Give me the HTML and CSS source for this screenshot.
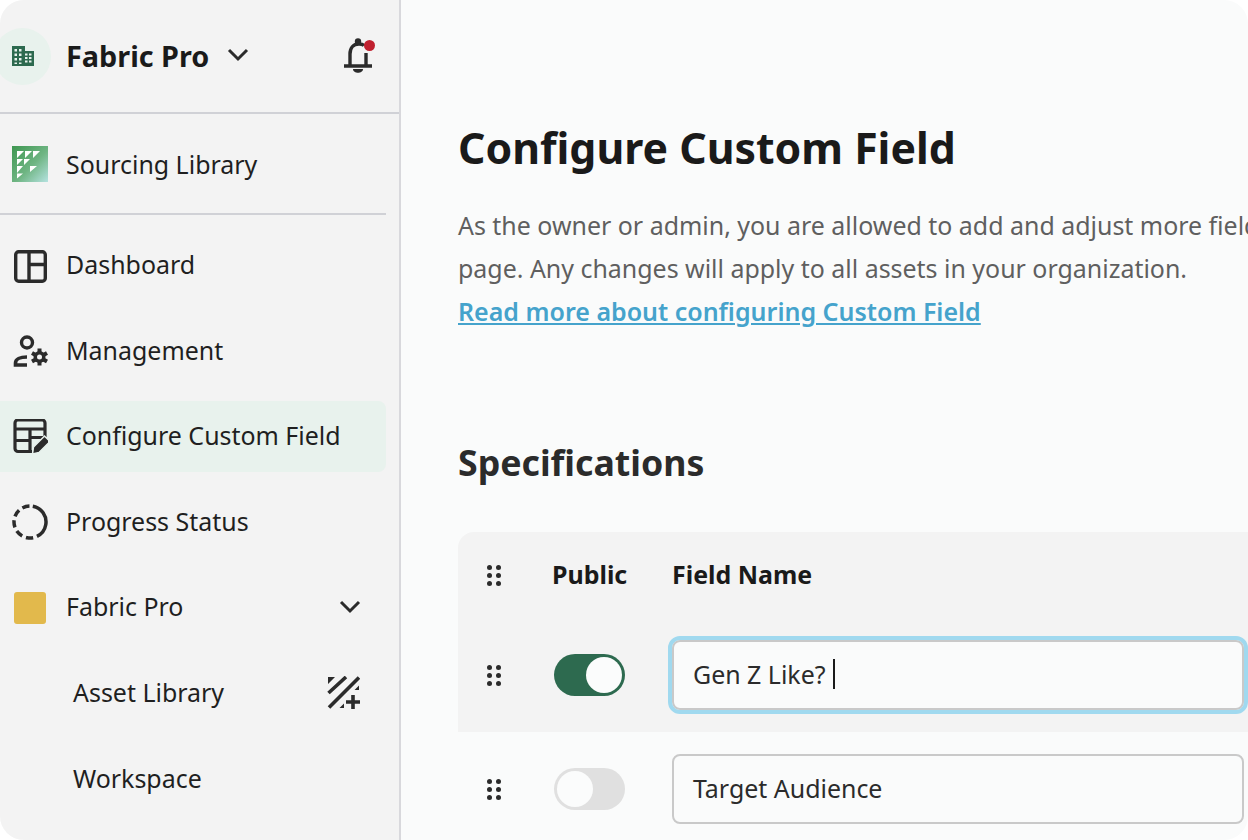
FILE: index.html
```html
<!DOCTYPE html>
<html lang="en">
<head>
    <meta charset="UTF-8">
    <meta name="viewport" content="width=device-width, initial-scale=1.0">
    <title>Configure Custom Field</title>
    <link rel="stylesheet" href="styles.css">
</head>
<body>
    <div class="frame">
        <aside class="sidebar">
            <div class="org">
                <div class="org-avatar">
                    <svg width="24" height="24" viewBox="0 0 24 24"><path fill="#2d6a4f" fill-rule="evenodd" d="M1 2h13v5h9v15H1zM3.500 5v2.500H6V5zM8 5v2.500h2.500V5zM3.500 9.500V12H6V9.500zM8 9.500V12h2.500V9.500zM3.500 14v2.500H6V14zM8 14v2.500h2.500V14zM3.500 18.500V20H6v-1.500zM8 18.500V20h2.500v-1.500zM14 9.500v2h2.500v-2zM18 9.500v2h2.500v-2zM14 13v2h2.500v-2zM18 13v2h2.500v-2zM14 16.500v2h2.500v-2zM18 16.500v2h2.500v-2z"/></svg>
                </div>
                <span class="org-name">Fabric Pro</span>
                <svg class="org-chevron" width="24" height="16" viewBox="0 0 24 16"><path d="M3 3l9 9 9-9" fill="none" stroke="#2b2b2b" stroke-width="3"/></svg>
                <div class="bell">
                    <svg width="32" height="38" viewBox="0 0 32 38"><path d="M3 29h28M9 29V17c0-6 3-10 9-10c2 0 4 .5 5 1.500M25 29V16" fill="none" stroke="#2b2b2b" stroke-width="3.400"/><circle cx="17" cy="4.500" r="3.200" fill="#2b2b2b"/><path d="M12 32h10c0 5-10 5-10 0z" fill="#2b2b2b"/></svg>
                    <span class="bell-dot"></span>
                </div>
            </div>

            <div class="sourcing">
                <svg width="36" height="36" viewBox="0 0 36 36">
                    <defs>
                        <linearGradient id="srcGrad" x1="0" y1="0" x2="1" y2="1">
                            <stop offset="0" stop-color="#3e9650"/>
                            <stop offset="0.55" stop-color="#6fb583"/>
                            <stop offset="1" stop-color="#b5e2e0"/>
                        </linearGradient>
                    </defs>
                    <rect width="36" height="36" fill="url(#srcGrad)"/>
                    <path fill="#fff" d="M5 5h7l-7 7zM13 5h7l-7 7zM21 5h7l-7 7zM5 13h6l-6 6zM12 13h6l-6 6zM5 20h6l-6 7zM18 20h7l-7 6zM5 27.500h6l-6 5z"/>
                </svg>
                <span>Sourcing Library</span>
            </div>

            <nav class="nav">
                <a class="nav-item">
                    <svg width="36" height="36" viewBox="0 0 36 36"><rect x="3.700" y="3.700" width="29.600" height="29.600" rx="3" fill="none" stroke="#2b2b2b" stroke-width="3.400"/><path d="M17 4v29M17 16.500h16" stroke="#2b2b2b" stroke-width="3.400"/></svg>
                    <span class="label">Dashboard</span>
                </a>
                <a class="nav-item">
                    <svg width="36" height="36" viewBox="0 0 36 36"><circle cx="15" cy="9.500" r="5.500" fill="none" stroke="#2b2b2b" stroke-width="3.400"/><path d="M15 24c-7 0-11.500 2-11.500 6v2h11.500" fill="none" stroke="#2b2b2b" stroke-width="3.600"/><path d="M27.500 15.500v17M20 20l15 8.500M20 28.500l15-8.500" stroke="#2b2b2b" stroke-width="4"/><circle cx="27.500" cy="24" r="6" fill="#2b2b2b"/><circle cx="27.500" cy="24" r="2.500" fill="#f3f3f3"/></svg>
                    <span class="label">Management</span>
                </a>
                <a class="nav-item active">
                    <svg width="36" height="36" viewBox="0 0 36 36"><path d="M20 32.500H6a3 3 0 0 1-3-3V4a3 3 0 0 1 3-3h24a3 3 0 0 1 3 3V18M3 10h30M3 21.500h15M18 10v21M18 18.500h14" fill="none" stroke="#2b2b2b" stroke-width="3.200"/><path d="M20.500 35l1-7L32.500 17l5.500 5.500L27 33.500z" fill="#2b2b2b" stroke="#e8f2ed" stroke-width="1.500"/></svg>
                    <span class="label">Configure Custom Field</span>
                </a>
                <a class="nav-item">
                    <svg width="36" height="36" viewBox="0 0 36 36"><circle cx="18" cy="18" r="16" fill="none" stroke="#2b2b2b" stroke-width="3.500" stroke-dasharray="40 4 7.300 4 7.300 4 7.300 4 7.300 4 7.300 4" transform="rotate(-80 18 18)"/></svg>
                    <span class="label">Progress Status</span>
                </a>
                <a class="nav-item">
                    <span class="swatch"></span>
                    <span class="label">Fabric Pro</span>
                    <svg class="nav-chevron" width="24" height="16" viewBox="0 0 24 16"><path d="M3 3l9 9 9-9" fill="none" stroke="#2b2b2b" stroke-width="3"/></svg>
                </a>
                <a class="nav-item sub">
                    <span class="label">Asset Library</span>
                    <svg class="nav-add" width="34" height="34" viewBox="0 0 34 34"><path d="M2 1h7L2 8zM33 9.500V14h-4.500zM18 27.500V32h-4.500z" fill="#2b2b2b"/><path d="M2.500 17L20 1M3 31.500L33 1.500" stroke="#2b2b2b" stroke-width="3.600"/><path d="M27 19v14M20 26h14" stroke="#2b2b2b" stroke-width="3.600"/></svg>
                </a>
                <a class="nav-item sub">
                    <span class="label">Workspace</span>
                </a>
            </nav>
        </aside>

        <main class="content">
            <h1>Configure Custom Field</h1>
            <p class="intro">
                As the owner or admin, you are allowed to add and adjust more fields on this<br>
                page. Any changes will apply to all assets in your organization.<br>
                <a href="#">Read more about configuring Custom Field</a>
            </p>

            <h2>Specifications</h2>

            <div class="spec-table">
                <div class="spec-row spec-head">
                    <div class="handle"><i></i><i></i><i></i><i></i><i></i><i></i></div>
                    <div class="head-cell">Public</div>
                    <div class="head-cell">Field Name</div>
                </div>
                <div class="spec-row editing">
                    <div class="handle"><i></i><i></i><i></i><i></i><i></i><i></i></div>
                    <div class="toggle on"><span></span></div>
                    <div class="field focus">Gen Z Like?<span class="caret"></span></div>
                </div>
                <div class="spec-row">
                    <div class="handle"><i></i><i></i><i></i><i></i><i></i><i></i></div>
                    <div class="toggle"><span></span></div>
                    <div class="field">Target Audience</div>
                </div>
            </div>
        </main>
    </div>
</body>
</html>
```

FILE: styles.css
```css
* {
    box-sizing: border-box;
}
html, body {
    margin: 0;
    padding: 0;
    height: 100%;
    background-color: #ffffff;
}
body {
    font-family: "Noto Sans", sans-serif;
    color: #1f1f1f;
    overflow: hidden;
}
.frame {
    display: flex;
    width: 1248px;
    height: 840px;
    border-radius: 24px;
    overflow: hidden;
    background-color: #fafbfb;
}

/* sidebar */
.sidebar {
    width: 401px;
    flex-shrink: 0;
    background-color: #f3f3f3;
    border-right: 2px solid #d8d8dc;
}
.org {
    display: flex;
    align-items: center;
    height: 114px;
    border-bottom: 2px solid #d0d1d6;
    padding-right: 26px;
}
.org-avatar {
    width: 57px;
    height: 57px;
    margin-left: -6px;
    border-radius: 50%;
    background-color: #e8f2ed;
    display: flex;
    align-items: center;
    justify-content: center;
    flex-shrink: 0;
}
.org-name {
    margin-left: 15px;
    font-size: 28.800px;
    font-weight: 700;
    color: #1a1a1a;
    margin-bottom: 2px;
}
.org-chevron {
    margin-left: 17px;
    margin-bottom: 2px;
}
.bell {
    margin-left: auto;
    position: relative;
    display: flex;
}
.bell-dot {
    position: absolute;
    top: 2.500px;
    right: -1.500px;
    width: 11px;
    height: 11px;
    border-radius: 50%;
    background-color: #c0202f;
}
.sourcing {
    display: flex;
    align-items: center;
    gap: 18px;
    height: 101px;
    margin-right: 13px;
    padding-left: 12px;
    border-bottom: 2px solid #d0d1d6;
    font-size: 24.950px;
}
.label {
    margin-bottom: 3px;
}
.nav {
    display: flex;
    flex-direction: column;
    gap: 14.600px;
    padding-top: 15px;
    margin-right: 13px;
}
.nav-item {
    display: flex;
    align-items: center;
    gap: 18px;
    height: 71px;
    padding-left: 12px;
    font-size: 24.950px;
    border-radius: 0 8px 8px 0;
}
.nav-item.active {
    background-color: #e8f2ed;
}
.nav-item.sub {
    padding-left: 73px;
}
.swatch {
    width: 32px;
    height: 32px;
    margin: 0 2px;
    border-radius: 3px;
    background-color: #e2b94c;
}
.nav-chevron {
    margin-left: auto;
    margin-right: 24px;
    margin-bottom: 2px;
}
.nav-add {
    margin-left: auto;
    margin-right: 26px;
}

/* main area */
.content {
    flex: 1;
    min-width: 0;
    padding: 118px 0 0 57px;
}
h1 {
    margin: 0;
    font-size: 42.800px;
    line-height: 60px;
    font-weight: 700;
    color: #1a1a1a;
}
.intro {
    margin: 26px 0 0;
    font-size: 24.950px;
    line-height: 43px;
    color: #5f5f5f;
    white-space: nowrap;
}
.intro a {
    color: #45a3cc;
    font-weight: 600;
    font-size: 25px;
}
h2 {
    margin: 105px 0 0;
    font-size: 35.700px;
    line-height: 48px;
    font-weight: 700;
    color: #2b2b2b;
}
.spec-table {
    margin-top: 46px;
    width: 900px;
}
.spec-row {
    display: grid;
    grid-template-columns: 94px 120px 572px;
    align-items: center;
    height: 114px;
}
.spec-head {
    height: 86px;
    font-size: 24.950px;
    font-weight: 700;
    color: #1a1a1a;
    background-color: #f3f3f3;
    border-radius: 16px 0 0 0;
}
.head-cell {
    padding-bottom: 2px;
}
.editing {
    background-color: #f3f3f3;
}
.handle {
    display: grid;
    grid-template-columns: 5px 5px;
    gap: 3px 4px;
    margin-left: 29px;
    width: 14px;
}
.handle i {
    width: 5px;
    height: 5px;
    border-radius: 50%;
    background-color: #2b2b2b;
}
.toggle {
    width: 71px;
    height: 42px;
    margin-left: 2px;
    padding: 3px;
    border-radius: 21px;
    background-color: #e0e0e0;
    display: flex;
}
.toggle span {
    width: 36px;
    height: 36px;
    border-radius: 50%;
    background-color: #fbfcfc;
}
.toggle.on {
    background-color: #2d6a4f;
    justify-content: flex-end;
}
.field {
    display: flex;
    align-items: center;
    height: 70px;
    padding: 0 0 2px 19px;
    font-size: 24.950px;
    color: #2b2b2b;
    background-color: #fafbfb;
    border: 2px solid #c9c9c9;
    border-radius: 8px;
}
.field.focus {
    outline: 4px solid #a0d9ef;
    outline-offset: 0;
}
.caret {
    width: 2px;
    height: 30px;
    margin-left: 7px;
    background-color: #1a1a1a;
}
```
